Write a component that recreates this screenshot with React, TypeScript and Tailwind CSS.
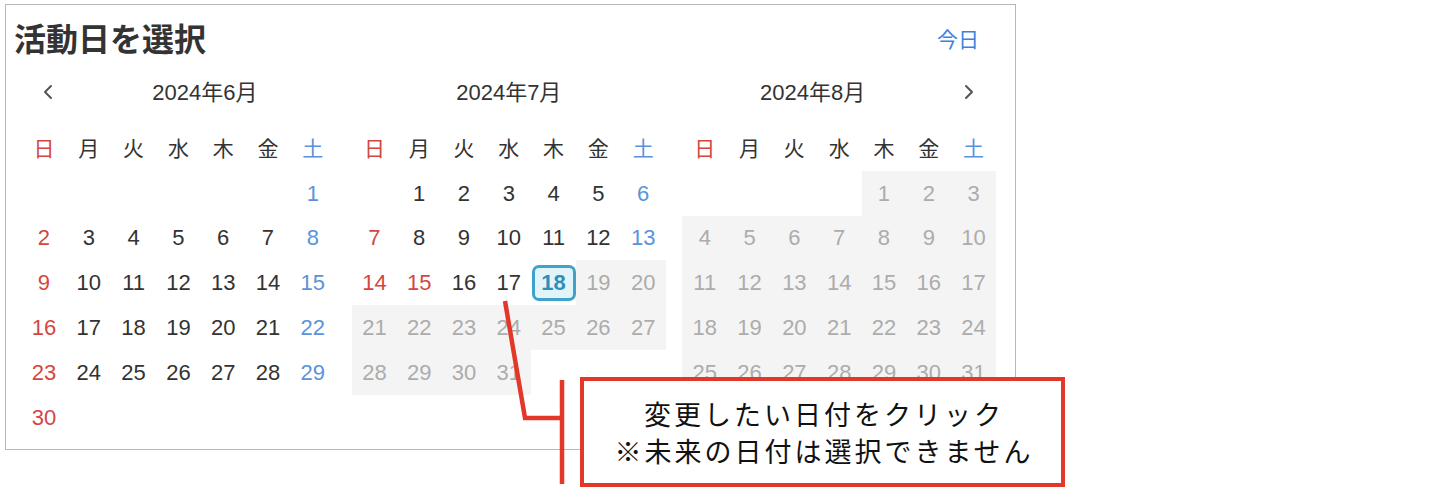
import React from "react";

type MonthDef = { label: string; m: number; start: number; days: number };

const MONTHS: MonthDef[] = [
  { label: "2024年6月", m: 6, start: 6, days: 30 },
  { label: "2024年7月", m: 7, start: 1, days: 31 },
  { label: "2024年8月", m: 8, start: 4, days: 31 },
];

const WEEK = ["日", "月", "火", "水", "木", "金", "土"];

// today is 2024/7/18, anything after it can't be picked
function isFuture(m: number, d: number) {
  return m > 7 || (m === 7 && d > 18);
}

function Chevron({ dir }: { dir: "left" | "right" }) {
  return (
    <svg width="12" height="16" viewBox="0 0 12 16" fill="none">
      <polyline
        points={dir === "left" ? "9,2 3,8 9,14" : "3,2 9,8 3,14"}
        stroke="#555"
        strokeWidth="2"
        strokeLinecap="round"
        strokeLinejoin="round"
      />
    </svg>
  );
}

function DayCell({ m, d, dow }: { m: number; d: number; dow: number }) {
  const future = isFuture(m, d);
  const selected = m === 7 && d === 18;
  const red = dow === 0 || (m === 7 && d === 15);

  if (selected) {
    return (
      <div className="flex h-[44.8px] items-center justify-center">
        <div className="flex h-[36px] w-[44px] items-center justify-center rounded-[7px] border-[3px] border-[#3ea2c9] bg-[#e2f3fa] text-[22px] font-bold text-[#2e8fb6]">
          {d}
        </div>
      </div>
    );
  }

  const color = future
    ? "text-[#acacac] bg-[#f4f4f4]"
    : red
      ? "text-[#d4473f]"
      : dow === 6
        ? "text-[#5a93dd]"
        : "text-[#333]";

  return (
    <div className={`flex h-[44.8px] items-center justify-center text-[22px] ${color}`}>
      {d}
    </div>
  );
}

function MonthGrid({ month, prev, next }: { month: MonthDef; prev?: boolean; next?: boolean }) {
  const blanks = Array.from({ length: month.start });
  const days = Array.from({ length: month.days }, (_, i) => i + 1);

  return (
    <div className="w-[313.6px]">
      <div className="flex h-[44px] items-center">
        {prev && (
          <button className="flex h-full w-[53px] items-center justify-center">
            <Chevron dir="left" />
          </button>
        )}
        <div className="flex-1 text-center text-[22px] text-[#333]">{month.label}</div>
        {next && (
          <button className="flex h-full w-[53px] items-center justify-center">
            <Chevron dir="right" />
          </button>
        )}
      </div>
      <div className="mt-[12px] grid grid-cols-7">
        {WEEK.map((w, i) => (
          <div
            key={w}
            className={`flex h-[44.8px] items-center justify-center text-[21px] ${
              i === 0 ? "text-[#d4473f]" : i === 6 ? "text-[#5a93dd]" : "text-[#333]"
            }`}
          >
            {w}
          </div>
        ))}
        {blanks.map((_, i) => (
          <div key={`b${i}`} className="h-[44.8px]" />
        ))}
        {days.map((d) => (
          <DayCell key={d} m={month.m} d={d} dow={(month.start + d - 1) % 7} />
        ))}
      </div>
    </div>
  );
}

export default function App() {
  return (
    <div className="relative h-[494px] w-[1438px] overflow-hidden bg-white font-['Liberation_Sans','Noto_Sans_CJK_JP',sans-serif]">
      <div className="ml-[5px] mt-[4px] h-[446px] w-[1011px] border border-[#b8b8b8] bg-white pt-[15px]">
        <div className="flex h-[40px] items-center justify-between pl-[8px] pr-[36px]">
          <h1 className="text-[32px] font-bold text-[#333]">活動日を選択</h1>
          <button className="text-[21px] text-[#3b82e0]">今日</button>
        </div>
        <div className="mt-[10px] flex gap-[16.8px] pl-[15.6px]">
          <MonthGrid month={MONTHS[0]} prev />
          <MonthGrid month={MONTHS[1]} />
          <MonthGrid month={MONTHS[2]} next />
        </div>
      </div>

      {/* annotation */}
      <svg className="pointer-events-none absolute left-0 top-0" width="1438" height="494">
        <polyline
          points="505,301 525,418 562,418"
          fill="none"
          stroke="#e3372a"
          strokeWidth="4.5"
        />
        <line x1="562" y1="380" x2="562" y2="484" stroke="#e3372a" strokeWidth="4.5" />
      </svg>
      <div className="absolute left-[580px] top-[377px] flex h-[110px] w-[485px] flex-col items-center justify-center border-[4.5px] border-[#e3372a] bg-white pl-[3px] font-['Noto_Sans_CJK_JP',sans-serif] text-[27px] leading-[37px] tracking-[3px] text-[#111]">
        <div>変更したい日付をクリック</div>
        <div>※未来の日付は選択できません</div>
      </div>
    </div>
  );
}
